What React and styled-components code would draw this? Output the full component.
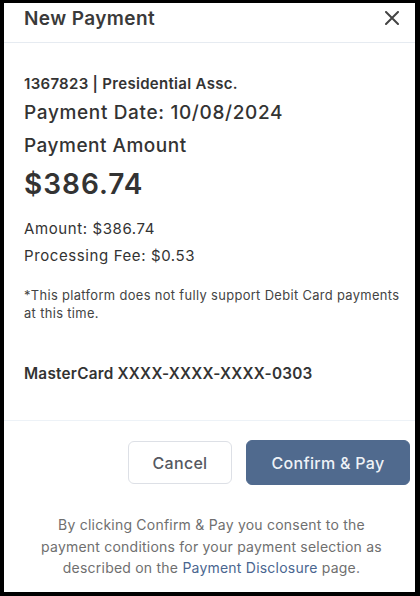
import React from "react";
import styled, { createGlobalStyle } from "styled-components";

const Global = createGlobalStyle`
  html, body { margin: 0; padding: 0; background: #000; }
  body { font-family: Inter, "Noto Sans", "Liberation Sans", sans-serif; -webkit-font-smoothing: antialiased; }
  * { box-sizing: border-box; }
`;

const Frame = styled.div`
  width: 420px;
  height: 596px;
  padding: 3px 5px 4px 4px;
  background: #000;
`;

const Modal = styled.div`
  width: 100%;
  height: 100%;
  background: #fff;
  display: flex;
  flex-direction: column;
  overflow: hidden;
`;

const Header = styled.div`
  height: 40px;
  display: flex;
  align-items: flex-start;
  justify-content: space-between;
  padding: 3px 16px 0 20px;
  border-bottom: 1px solid #e6ebf1;
`;

const Title = styled.h2`
  margin: 0;
  font-size: 19px;
  line-height: 26px;
  font-weight: 600;
  letter-spacing: 0.4px;
  color: #3a3a3a;
`;

const CloseButton = styled.button`
  border: 0;
  background: none;
  padding: 0;
  margin-top: 5px;
  width: 14px;
  height: 14px;
  display: flex;
  cursor: pointer;
`;

const Body = styled.div`
  padding: 30px 8px 0 20px;
  height: 378px;
  border-bottom: 1px solid #edf2f7;
  display: flex;
  flex-direction: column;
`;

const Text = styled.div`
  margin-top: ${(p) => p.$mt || 0}px;
  font-size: ${(p) => p.$size}px;
  line-height: ${(p) => p.$lh}px;
  font-weight: ${(p) => p.$weight || 400};
  letter-spacing: ${(p) => p.$ls || 0}px;
  color: ${(p) => p.$color || "#333"};
`;

const Footer = styled.div`
  display: flex;
  flex-direction: column;
  align-items: center;
  padding-top: 19px;
`;

const Actions = styled.div`
  align-self: stretch;
  display: flex;
  justify-content: flex-end;
  align-items: center;
  gap: 14px;
  padding-right: 5px;
`;

const Button = styled.button`
  font-family: inherit;
  font-size: 16px;
  font-weight: 500;
  letter-spacing: 0.3px;
  border-radius: 6px;
  cursor: pointer;
  width: ${(p) => (p.$primary ? 164 : 104)}px;
  height: ${(p) => (p.$primary ? 45 : 43)}px;
  border: 1px solid ${(p) => (p.$primary ? "#506a8e" : "#dde0e6")};
  background: ${(p) => (p.$primary ? "#506a8e" : "#fff")};
  color: ${(p) => (p.$primary ? "#eef2f7" : "#555861")};
`;

const Consent = styled.p`
  margin: 29px 0 0 4px;
  max-width: 356px;
  text-align: center;
  font-size: 14px;
  line-height: 21.5px;
  letter-spacing: 0.22px;
  color: #6f6f6f;
`;

const Link = styled.a`
  color: #4a6690;
  text-decoration: none;
`;

export default function App() {
  return (
    <>
      <Global />
      <Frame>
        <Modal>
          <Header>
            <Title>New Payment</Title>
            <CloseButton aria-label="Close">
              <svg width="14" height="14" viewBox="0 0 14 14">
                <path d="M1 1L13 13M13 1L1 13" stroke="#444" strokeWidth="2" strokeLinecap="round" />
              </svg>
            </CloseButton>
          </Header>
          <Body>
            <Text $size={15} $lh={22} $weight={600} $ls={0.3}>1367823 | Presidential Assc.</Text>
            <Text $mt={5} $size={19} $lh={26} $weight={500} $ls={0.65}>Payment Date: 10/08/2024</Text>
            <Text $mt={7} $size={19} $lh={26} $weight={500} $ls={0.5}>Payment Amount</Text>
            <Text $mt={7} $size={28} $lh={36} $weight={600} $ls={1}>$386.74</Text>
            <Text $mt={17} $size={15} $lh={20} $ls={0.6}>Amount: $386.74</Text>
            <Text $mt={7} $size={15} $lh={20} $ls={0.6}>Processing Fee: $0.53</Text>
            <Text $mt={21} $size={12.9} $lh={18} $ls={0.35} $color="#444">
              *This platform does not fully support Debit Card payments at this time.
            </Text>
            <Text $mt={41} $size={15.3} $lh={20} $weight={600} $ls={0.25}>MasterCard XXXX-XXXX-XXXX-0303</Text>
          </Body>
          <Footer>
            <Actions>
              <Button>Cancel</Button>
              <Button $primary>Confirm &amp; Pay</Button>
            </Actions>
            <Consent>
              By clicking Confirm &amp; Pay you consent to the payment conditions for your payment selection as described on the <Link href="#">Payment Disclosure</Link> page.
            </Consent>
          </Footer>
        </Modal>
      </Frame>
    </>
  );
}
